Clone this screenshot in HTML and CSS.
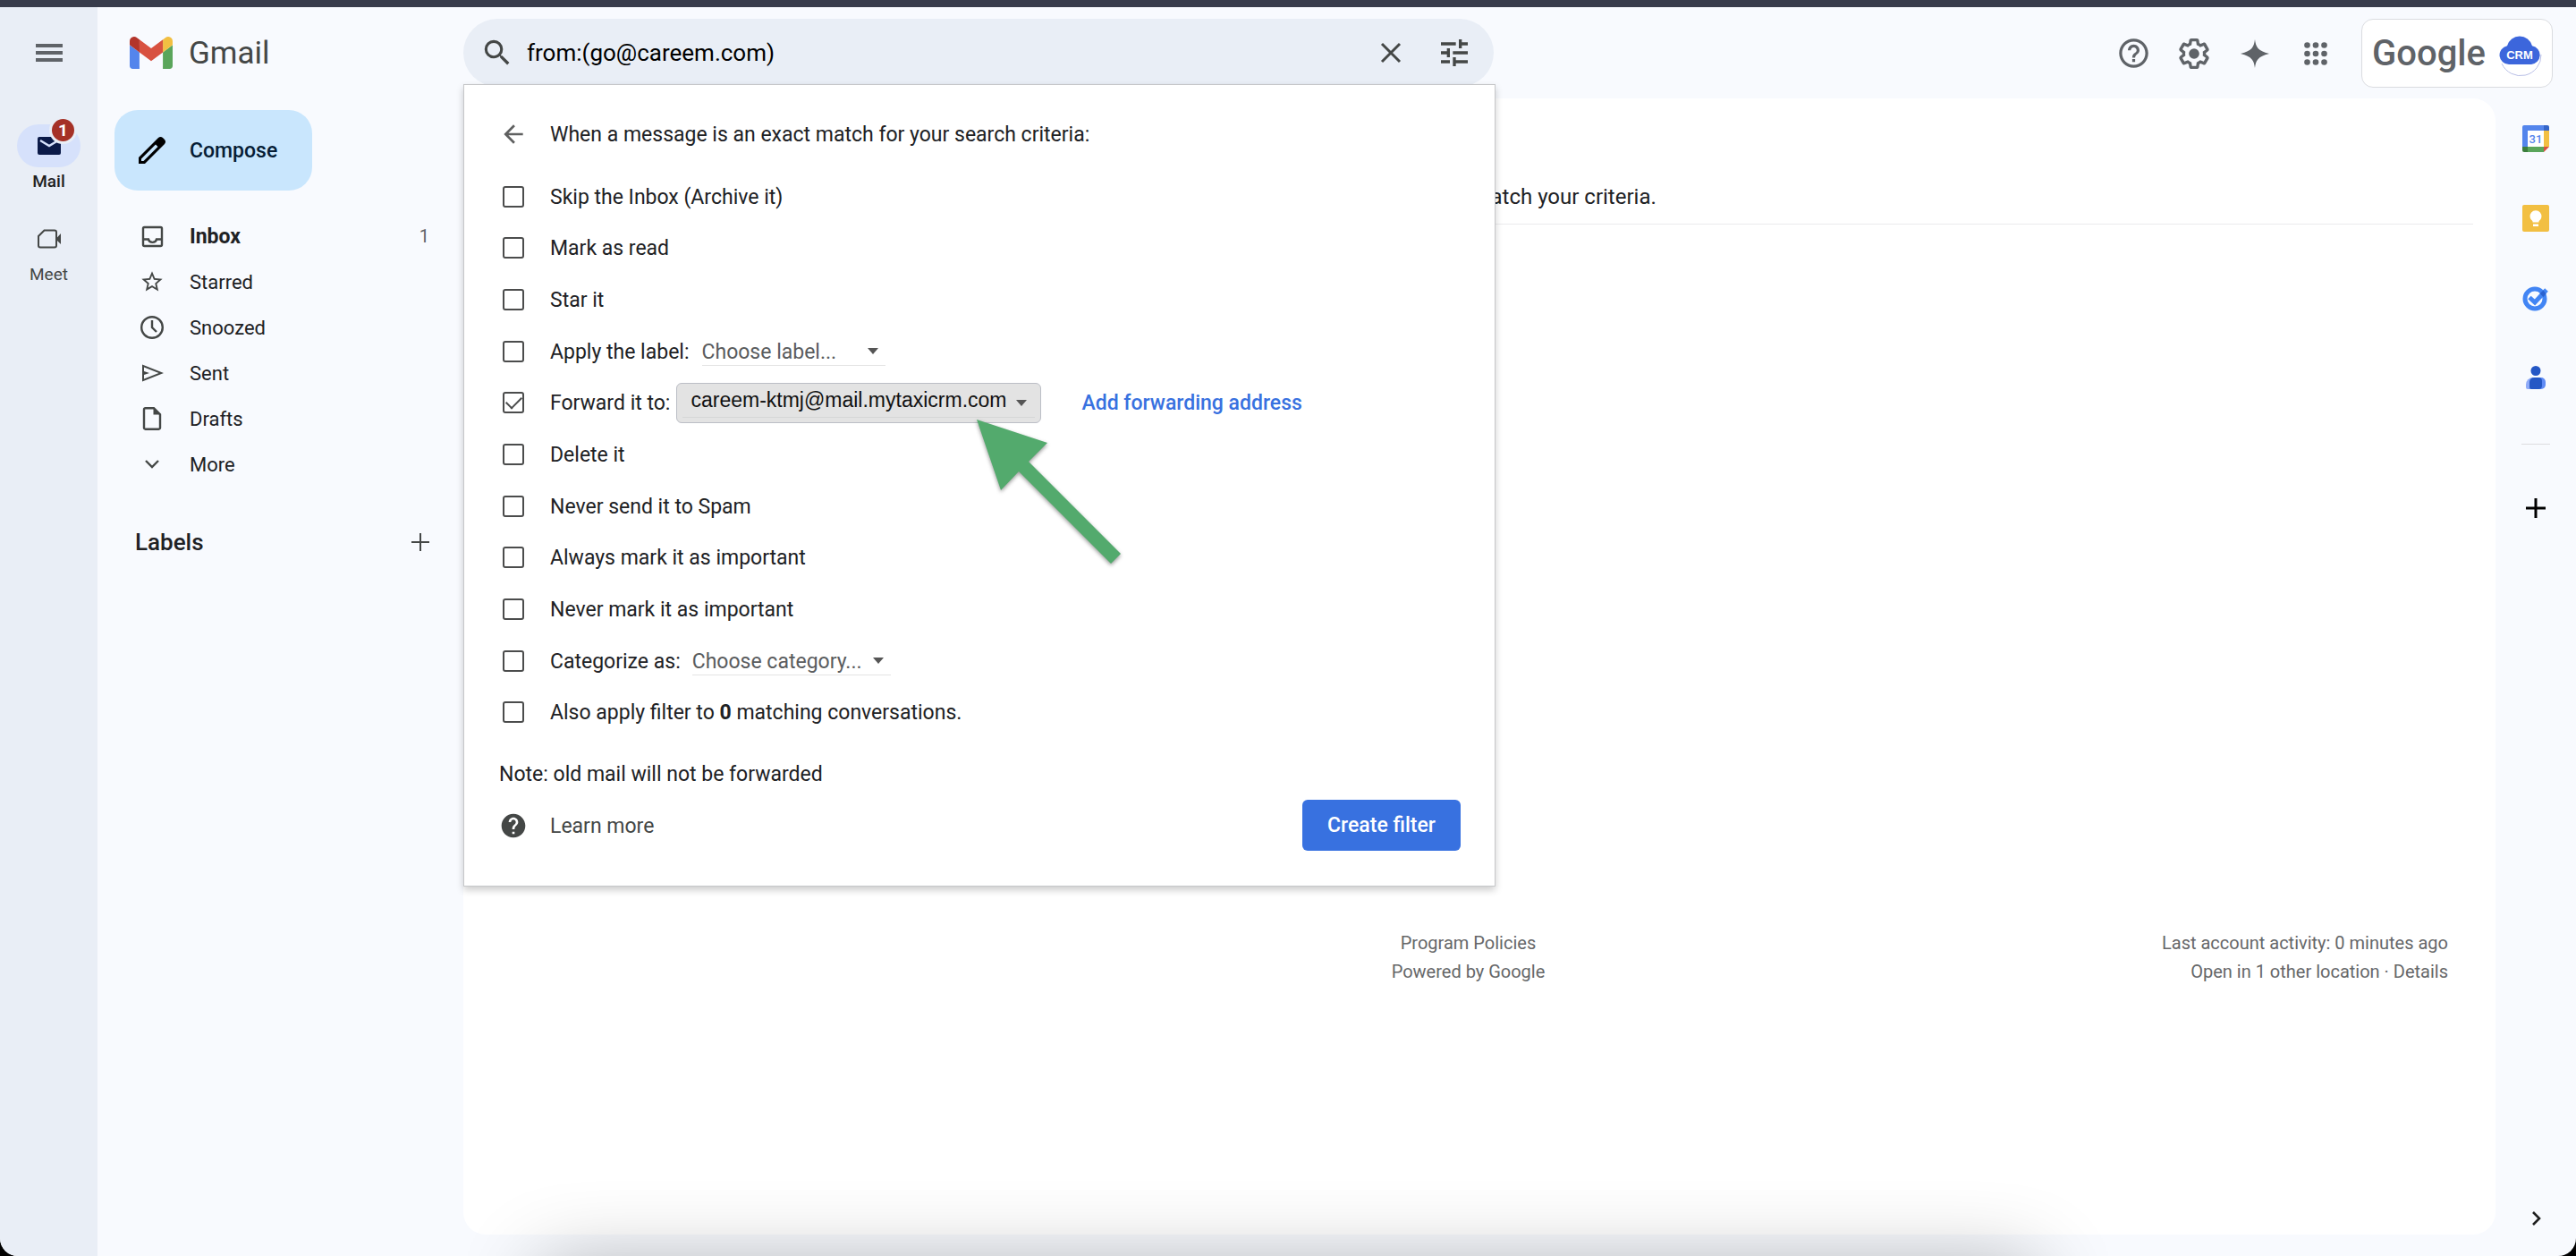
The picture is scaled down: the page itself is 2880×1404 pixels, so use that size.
FILE: index.html
```html
<!DOCTYPE html>
<html lang="en">
<head>
<meta charset="utf-8">
<title>Gmail</title>
<link rel="stylesheet" href="styles.css">
</head>
<body>
<div class="window">
  <nav class="rail" aria-label="Apps">
    <button class="icon-button" aria-label="Main menu">
      <svg width="30" height="20" viewBox="0 0 30 20"><path fill="#5f6368" d="M0 0h30v4H0zM0 8h30v4H0zM0 16h30v4H0z"/></svg>
    </button>
    <a class="rail-item rail-item-active" href="#mail">
      <span class="rail-icon">
        <svg width="26" height="20" viewBox="0 0 26 20"><rect width="26" height="20" rx="2" fill="#0b1a48"/><path d="M3 4l10 6 10-6" fill="none" stroke="#d6e1fb" stroke-width="2.4"/></svg>
        <span class="badge">1</span>
      </span>
      Mail
    </a>
    <a class="rail-item" href="#meet">
      <span class="rail-icon">
        <svg width="26" height="22" viewBox="0 0 26 22"><path d="M7.5 1.5H19a2 2 0 0 1 2 2v15a2 2 0 0 1-2 2H3a2 2 0 0 1-2-2V8z" fill="none" stroke="#444746" stroke-width="2"/><path d="M21 10.5L26 5v12l-5-5z" fill="#444746"/></svg>
      </span>
      Meet
    </a>
  </nav>

  <div class="app">
    <header class="header">
      <a class="brand" href="#home">
        <svg width="48" height="36" viewBox="52 42 88 66"><path fill="#5485ec" d="M58 108h14V74L52 59v43c0 3.32 2.69 6 6 6"/><path fill="#5aa55b" d="M120 108h14c3.32 0 6-2.69 6-6V59l-20 15"/><path fill="#f2bf42" d="M120 48v26l20-15v-8c0-7.42-8.47-11.65-14.4-7.2"/><path fill="#d85140" d="M72 74V48l24 18 24-18v26L96 92"/><path fill="#b3352b" d="M52 51v8l20 15V48l-5.6-4.2c-5.94-4.45-14.4-.22-14.4 7.2"/></svg>
        <span class="label-text">Gmail</span>
      </a>

      <div class="search">
        <form class="search-bar">
          <button type="button" class="icon-button" aria-label="Search">
            <svg width="38" height="38" viewBox="0 0 24 24"><path fill="#444746" d="M15.5 14h-.79l-.28-.27A6.47 6.47 0 0 0 16 9.500 6.500 6.500 0 1 0 9.500 16c1.610 0 3.090-.590 4.230-1.570l.270.280v.790l5 4.990L20.490 19zm-6 0C7.010 14 5 11.990 5 9.500S7.010 5 9.500 5 14 7.010 14 9.500 11.990 14 9.500 14z"/></svg>
          </button>
          <input class="search-input" type="text" value="from:(go@careem.com)" aria-label="Search mail">
          <button type="button" class="icon-button" aria-label="Clear search">
            <svg width="24" height="24" viewBox="0 0 24 24"><path d="M2 2l20 20M22 2L2 22" stroke="#444746" stroke-width="3" fill="none"/></svg>
          </button>
          <button type="button" class="icon-button" aria-label="Show search options">
            <svg width="40" height="40" viewBox="0 0 24 24"><path fill="#444746" d="M3 17v2h6v-2H3zM3 5v2h10V5H3zm10 16v-2h8v-2h-8v-2h-2v6h2zM7 9v2H3v2h4v2h2V9H7zm14 4v-2H11v2h10zm-6-4h2V7h4V5h-4V3h-2v6z"/></svg>
          </button>
        </form>

        <form class="filter">
          <div class="filter-title">
            <button type="button" class="cell-icon" aria-label="Back">
              <svg width="32" height="32" viewBox="0 0 24 24"><path fill="#5f6060" d="M20 11H7.830l5.590-5.590L12 4l-8 8 8 8 1.410-1.410L7.830 13H20z"/></svg>
            </button>
            <span class="label-text">When a message is an exact match for your search criteria:</span>
          </div>
          <div class="filter-rows">
            <div class="filter-row"><span class="cell-icon"><input type="checkbox" id="f1"></span><label class="label-text" for="f1">Skip the Inbox (Archive it)</label></div>
            <div class="filter-row"><span class="cell-icon"><input type="checkbox" id="f2"></span><label class="label-text" for="f2">Mark as read</label></div>
            <div class="filter-row"><span class="cell-icon"><input type="checkbox" id="f3"></span><label class="label-text" for="f3">Star it</label></div>
            <div class="filter-row"><span class="cell-icon"><input type="checkbox" id="f4"></span><label class="label-text" for="f4">Apply the label:</label>
              <span class="picker picker-label"><select aria-label="Label"><option>Choose label...</option></select></span></div>
            <div class="filter-row"><span class="cell-icon"><input type="checkbox" id="f5" checked></span><label class="label-text" for="f5">Forward it to:</label>
              <span class="picker picker-forward"><select aria-label="Forwarding address"><option>careem-ktmj@mail.mytaxicrm.com</option></select></span>
              <a class="add-link label-text" href="#forwarding">Add forwarding address</a></div>
            <div class="filter-row"><span class="cell-icon"><input type="checkbox" id="f6"></span><label class="label-text" for="f6">Delete it</label></div>
            <div class="filter-row"><span class="cell-icon"><input type="checkbox" id="f7"></span><label class="label-text" for="f7">Never send it to Spam</label></div>
            <div class="filter-row"><span class="cell-icon"><input type="checkbox" id="f8"></span><label class="label-text" for="f8">Always mark it as important</label></div>
            <div class="filter-row"><span class="cell-icon"><input type="checkbox" id="f9"></span><label class="label-text" for="f9">Never mark it as important</label></div>
            <div class="filter-row"><span class="cell-icon"><input type="checkbox" id="f10"></span><label class="label-text" for="f10">Categorize as:</label>
              <span class="picker picker-category"><select aria-label="Category"><option>Choose category...</option></select></span></div>
            <div class="filter-row"><span class="cell-icon"><input type="checkbox" id="f11"></span><label class="label-text" for="f11">Also apply filter to <b>0</b> matching conversations.</label></div>
          </div>
          <p class="note">Note: old mail will not be forwarded</p>
          <div class="filter-actions">
            <a class="learn" href="#learn">
              <span class="cell-icon"><svg width="32" height="32" viewBox="0 0 24 24"><path fill="#444746" d="M12 2C6.480 2 2 6.480 2 12s4.480 10 10 10 10-4.480 10-10S17.520 2 12 2zm1 17h-2v-2h2v2zm2.070-7.750l-.9.920C13.450 12.900 13 13.500 13 15h-2v-.5c0-1.100.450-2.100 1.170-2.830l1.240-1.260c.370-.360.590-.860.590-1.410 0-1.100-.9-2-2-2s-2 .9-2 2H8c0-2.210 1.790-4 4-4s4 1.790 4 4c0 .880-.360 1.680-.930 2.250z"/></svg></span>
              <span class="label-text">Learn more</span>
            </a>
            <button type="button" class="create">Create filter</button>
          </div>
          <svg class="pointer" width="200" height="190" viewBox="0 0 200 190" aria-hidden="true"><path fill="#53aa6d" d="M13 10l79 26-21 21 103 103-11 11L60 68 40 89z"/></svg>
        </form>
      </div>

      <div class="tools">
        <button class="icon-button" aria-label="Support"><svg width="39" height="39" viewBox="0 0 24 24"><path fill="#5f6368" d="M11 18h2v-2h-2v2zm1-16C6.480 2 2 6.480 2 12s4.480 10 10 10 10-4.480 10-10S17.520 2 12 2zm0 18c-4.410 0-8-3.590-8-8s3.590-8 8-8 8 3.590 8 8-3.590 8-8 8zm0-14c-2.210 0-4 1.790-4 4h2c0-1.100.9-2 2-2s2 .9 2 2c0 2-3 1.750-3 5h2c0-2.250 3-2.500 3-5 0-2.210-1.790-4-4-4z"/></svg></button>
        <button class="icon-button" aria-label="Settings"><svg width="40" height="40" viewBox="0 0 24 24"><path fill="#5f6368" d="M13.850 22.250h-3.700c-.740 0-1.360-.540-1.450-1.270l-.270-1.890c-.270-.140-.530-.290-.790-.460l-1.800.720c-.7.260-1.470-.030-1.810-.650L2.200 15.530c-.350-.660-.2-1.440.360-1.880l1.530-1.190c-.010-.150-.020-.3-.020-.460 0-.150.010-.310.020-.460l-1.520-1.190c-.590-.450-.740-1.260-.370-1.880l1.850-3.190c.340-.620 1.110-.9 1.790-.630l1.810.730c.260-.170.520-.320.780-.460l.270-1.910c.090-.7.710-1.250 1.440-1.250h3.700c.740 0 1.360.540 1.450 1.270l.270 1.890c.270.140.530.290.790.460l1.800-.720c.710-.260 1.480.030 1.820.650l1.840 3.180c.360.660.2 1.440-.360 1.880l-1.520 1.190c.010.150.020.3.020.460s-.010.310-.020.460l1.520 1.190c.560.450.720 1.230.370 1.860l-1.860 3.220c-.340.620-1.110.9-1.800.630l-1.800-.720c-.260.170-.520.320-.780.460l-.270 1.910c-.1.680-.720 1.220-1.460 1.220zm-3.230-2h2.760l.370-2.550.530-.220c.440-.180.880-.440 1.340-.780l.450-.340 2.380.960 1.380-2.400-2.030-1.580.070-.560c.030-.260.060-.510.060-.780s-.030-.530-.060-.780l-.070-.560 2.030-1.580-1.390-2.400-2.390.960-.450-.350c-.420-.320-.870-.580-1.330-.770l-.520-.220-.370-2.550h-2.760l-.370 2.550-.530.210c-.440.190-.880.440-1.340.790l-.450.330-2.380-.950-1.390 2.390 2.030 1.580-.070.560a7 7 0 0 0-.060.790c0 .260.020.530.060.780l.070.560-2.030 1.580 1.380 2.400 2.390-.960.450.350c.430.330.860.580 1.330.770l.530.220z"/><circle cx="12" cy="12" r="3.500" fill="#5f6368"/></svg></button>
        <button class="icon-button" aria-label="Ask Gemini"><svg width="32" height="32" viewBox="0 0 32 32"><path fill="#5f6368" d="M16 0C17 8 19 13 32 16C19 19 17 24 16 32C15 24 13 19 0 16C13 13 15 8 16 0z"/></svg></button>
        <button class="icon-button" aria-label="Google apps"><svg width="26" height="26" viewBox="0 0 26 26"><g fill="#5f6368"><circle cx="3.500" cy="3.500" r="3.300"/><circle cx="13" cy="3.500" r="3.300"/><circle cx="22.500" cy="3.500" r="3.300"/><circle cx="3.500" cy="13" r="3.300"/><circle cx="13" cy="13" r="3.300"/><circle cx="22.500" cy="13" r="3.300"/><circle cx="3.500" cy="22.500" r="3.300"/><circle cx="13" cy="22.500" r="3.300"/><circle cx="22.500" cy="22.500" r="3.300"/></g></svg></button>
        <a class="account" href="#account">
          <span class="account-name">Google</span>
          <svg width="48" height="54" viewBox="0 0 48 54"><path d="M3 38a23 23 0 0 0 44-10" fill="none" stroke="#b9bfe6" stroke-width="1"/><path fill="#3c66dc" d="M11 39A10.500 10.500 0 0 1 9 18.200A14.500 14.500 0 0 1 37 18.200A10.500 10.500 0 0 1 36 39z"/><text class="cloud-text" x="23" y="33" text-anchor="middle">CRM</text></svg>
        </a>
      </div>
    </header>

    <div class="body">
      <aside class="sidebar">
        <button class="compose">
          <svg width="32" height="32" viewBox="0 0 32 32"><path fill="#000" fill-rule="evenodd" d="M1 31v-7L23 2c1.500-1.300 3.500-1.300 5 0l2 2c1.400 1.500 1.400 3.500 0 5L8 31zM4 28h2.500L22.500 12l-2.500-2.500L4 25.500z"/></svg>
          <span class="label-text">Compose</span>
        </button>
        <ul class="folders">
          <li><a class="folder folder-active" href="#inbox"><svg width="28" height="28" viewBox="0 0 28 28"><g fill="none" stroke="#444746" stroke-width="2.400"><rect x="4" y="4" width="21" height="21" rx="1.500"/><path d="M4 17.500h6c1 4.500 8 4.500 9 0h6"/></g></svg><span class="label-text">Inbox</span><span class="count">1</span></a></li>
          <li><a class="folder" href="#starred"><svg width="28" height="28" viewBox="0 0 24 24"><path fill="#444746" d="M22 9.240l-7.190-.620L12 2 9.190 8.630 2 9.240l5.460 4.730L5.820 21 12 17.270 18.180 21l-1.630-7.030L22 9.240zM12 15.400l-3.760 2.270 1-4.280-3.320-2.880 4.380-.380L12 6.100l1.710 4.040 4.380.380-3.320 2.880 1 4.280L12 15.400z"/></svg><span class="label-text">Starred</span></a></li>
          <li><a class="folder" href="#snoozed"><svg width="28" height="28" viewBox="0 0 28 28"><g fill="none" stroke="#444746" stroke-width="2.400"><circle cx="14" cy="14" r="11.800"/><path d="M14 6v8l5 5"/></g></svg><span class="label-text">Snoozed</span></a></li>
          <li><a class="folder" href="#sent"><svg width="28" height="28" viewBox="0 0 28 28"><path fill="#444746" fill-rule="evenodd" d="M3 4.500L27 14 3 23.500zM5 7.500v4.500l6 2-6 2v4.500L21.500 14z"/></svg><span class="label-text">Sent</span></a></li>
          <li><a class="folder" href="#drafts"><svg width="28" height="28" viewBox="0 0 28 28"><path d="M6.500 2.200h9.500l7 7v15a1.500 1.500 0 0 1-1.500 1.500h-15a1.500 1.500 0 0 1-1.500-1.500v-20.500a1.500 1.500 0 0 1 1.500-1.500z" fill="none" stroke="#444746" stroke-width="2.400"/><path d="M15.500 1.500v8h8z" fill="#444746"/></svg><span class="label-text">Drafts</span></a></li>
          <li><a class="folder" href="#more"><svg width="28" height="28" viewBox="0 0 28 28"><path d="M7 10l7 7 7-7" fill="none" stroke="#444746" stroke-width="2.400"/></svg><span class="label-text">More</span></a></li>
        </ul>
        <div class="labels">
          <h2>Labels</h2>
          <button class="icon-button" aria-label="Create new label"><svg width="20" height="20" viewBox="0 0 20 20"><path d="M10 0v20M0 10h20" stroke="#444746" stroke-width="2"/></svg></button>
        </div>
      </aside>

      <main class="card">
        <p class="empty">Sorry, no messages match your criteria.</p>
        <footer class="foot">
          <p class="foot-center"><a href="#policies">Program Policies</a><br>Powered by Google</p>
          <p class="foot-right">Last account activity: 0 minutes ago<br>Open in 1 other location · <a href="#details">Details</a></p>
        </footer>
      </main>

      <aside class="side-apps" aria-label="Side panel">
        <a href="#calendar" aria-label="Calendar"><svg width="30" height="30" viewBox="0 0 30 30"><rect x="5" y="5" width="20" height="20" fill="#fff"/><path fill="#5485ec" d="M2 0h22v6H6v18H0V2a2 2 0 0 1 2-2z"/><path fill="#3565c8" d="M24 0h4a2 2 0 0 1 2 2v4h-6z"/><path fill="#f2bf42" d="M24 6h6v18h-6z"/><path fill="#5aa55b" d="M6 24h18v6H6z"/><path fill="#3b7d3d" d="M0 24h6v6H2a2 2 0 0 1-2-2z"/><path fill="#d85140" d="M24 24h6l-6 6z"/><text class="calendar-text" x="15" y="20" text-anchor="middle">31</text></svg></a>
        <a href="#keep" aria-label="Keep"><svg width="30" height="30" viewBox="0 0 30 30"><rect width="30" height="30" rx="2" fill="#f2bf42"/><path fill="#fff" d="M11.500 19.500v-1.200a6.500 6.500 0 1 1 7 0v1.200zM12 21.500h6V24h-6z"/></svg></a>
        <a href="#tasks" aria-label="Tasks"><svg width="30" height="30" viewBox="0 0 30 30"><circle cx="14" cy="16" r="11" fill="none" stroke="#4285f4" stroke-width="5"/><path d="M8 14.500l6 5.500L27 6" fill="none" stroke="#4285f4" stroke-width="5"/><path fill="#2a62d0" d="M19.500 10l4-3.500 3 4-3 3.500z"/></svg></a>
        <a href="#contacts" aria-label="Contacts"><svg width="30" height="30" viewBox="0 0 30 30"><circle cx="15" cy="7.500" r="5.500" fill="#2457c5"/><path fill="#8fabf8" d="M12 15a8 8 0 0 0-8 8v3a2 2 0 0 0 2 2h6z"/><path fill="#5f8bf5" d="M18 15h3a5 5 0 0 1 5 5v3a5 5 0 0 1-5 5h-3z"/><path fill="#2457c5" d="M13 15h5a4 4 0 0 1 4 4v5a4 4 0 0 1-4 4h-8a2 2 0 0 1-2-2v-6a5 5 0 0 1 5-5z"/></svg></a>
        <hr>
        <button class="icon-button" aria-label="Get add-ons"><svg width="22" height="22" viewBox="0 0 22 22"><path d="M11 0v22M0 11h22" stroke="#000" stroke-width="3"/></svg></button>
        <button class="icon-button collapse" aria-label="Hide side panel"><svg width="20" height="20" viewBox="0 0 20 20"><path d="M7 3l7 7-7 7" fill="none" stroke="#1f1f1f" stroke-width="2.600"/></svg></button>
      </aside>
    </div>
  </div>
  <div class="dock-shadow" aria-hidden="true"></div>
</div>
</body>
</html>
```
FILE: styles.css
```css
* {
  box-sizing: border-box;
}

body {
  margin: 0;
  background: #000;
  color: #202124;
  font: 23px/32px Roboto, sans-serif;
}

a {
  color: inherit;
  text-decoration: none;
}

svg {
  display: block;
  flex: none;
}

button,
input,
select {
  margin: 0;
  padding: 0;
  border: 0;
  background: none;
  color: inherit;
  font: inherit;
}

p,
h2,
ul {
  margin: 0;
  padding: 0;
}

.window {
  position: relative;
  display: flex;
  min-height: 100vh;
  overflow: hidden;
  border-top: 8px solid #383c4b;
  border-radius: 0 0 20px 20px;
  background: #f8fafe;
}

.icon-button {
  display: grid;
  place-items: center;
  flex: none;
  width: 40px;
  height: 48px;
}

/* Optical centring of text beside an icon */
.label-text {
  padding-top: 2px;
}

/* App rail */
.rail {
  display: flex;
  flex-direction: column;
  align-items: center;
  flex: none;
  width: 109px;
  padding-top: 27px;
  background: #e9eef6;
}

.rail-item {
  display: flex;
  flex-direction: column;
  align-items: center;
  margin-top: 24px;
  color: #444746;
  font-size: 19px;
  line-height: 32px;
}

.rail-item-active {
  margin-top: 56px;
  color: #1f1f1f;
  font-weight: 500;
}

.rail-icon {
  position: relative;
  display: grid;
  place-items: center;
  width: 71px;
  height: 48px;
  border-radius: 24px;
}

.rail-item-active .rail-icon {
  background: #d6e1fb;
}

.badge {
  position: absolute;
  top: -9px;
  right: 4px;
  width: 31px;
  height: 31px;
  border: 3px solid #e9eef6;
  border-radius: 50%;
  background: #a53127;
  color: #fff;
  font-size: 19px;
  font-weight: 700;
  line-height: 25px;
  text-align: center;
}

/* Header */
.app {
  display: flex;
  flex: 1;
  flex-direction: column;
  min-width: 0;
}

.header {
  display: flex;
  flex: none;
  height: 102px;
  padding: 13px 26px 0 0;
}

.brand {
  display: flex;
  align-items: center;
  flex: none;
  gap: 18px;
  width: 409px;
  height: 76px;
  padding-left: 36px;
  color: #444746;
  font-size: 35px;
}

.search {
  position: relative;
  flex: 0 1 1154px;
  min-width: 0;
}

.search-bar {
  display: flex;
  align-items: center;
  height: 76px;
  margin-right: 2px;
  padding: 0 24px 0 18px;
  border-radius: 38px;
  background: #e9eef6;
}

.search-input {
  flex: 1;
  min-width: 0;
  margin-left: 13px;
  color: #000;
  font-size: 26px;
  outline: 0;
}

.search-bar .icon-button:last-child {
  margin-left: 31px;
}

.tools {
  display: flex;
  align-items: center;
  gap: 28px;
  height: 77px;
  margin-left: auto;
}

.account {
  display: flex;
  align-items: center;
  justify-content: space-between;
  width: 214px;
  height: 77px;
  margin-left: 3px;
  padding: 0 11px;
  border: 1px solid #dadce0;
  border-radius: 13px;
  background: #fff;
}

.account-name {
  color: #5f6368;
  font-size: 40px;
  font-weight: 500;
}

.cloud-text {
  fill: #fff;
  font: 700 13px "Liberation Sans", sans-serif;
}

/* Filter panel */
.filter {
  position: absolute;
  z-index: 2;
  top: 73px;
  left: 0;
  width: 100%;
  padding: 26px 38px 39px 39px;
  border: 1px solid #c6c7c9;
  background: #fff;
  box-shadow: 0 4px 8px rgba(0, 0, 0, 0.2);
}

.filter-title,
.filter-row {
  display: flex;
  align-items: center;
}

.filter-title {
  height: 58px;
  margin-bottom: 12px;
}

.filter-rows {
  display: grid;
  grid-auto-rows: 1fr;
  height: 634px;
}

.cell-icon {
  display: grid;
  place-items: center;
  flex: none;
  width: 32px;
  height: 32px;
  margin-right: 25px;
}

.cell-icon input {
  display: grid;
  place-items: center;
  width: 24px;
  height: 24px;
  border: 2px solid #4b4c4c;
  border-radius: 3px;
  appearance: none;
}

.cell-icon input:checked::before {
  content: "";
  width: 15px;
  height: 8px;
  border: solid #4b4c4c;
  border-width: 0 0 2px 2px;
  transform: translateY(-2px) rotate(-45deg);
}

.picker {
  display: grid;
  align-items: center;
  height: 33px;
  border-bottom: 1px solid #e4e4e4;
  color: #5a5c5e;
}

.picker::after {
  content: "";
  grid-area: 1 / 1;
  justify-self: end;
  margin-right: 8px;
  border: solid transparent;
  border-width: 7px 6px 0;
  border-top-color: #555;
  pointer-events: none;
}

.picker select {
  grid-area: 1 / 1;
  width: 100%;
  height: 32px;
  padding-top: 2px;
  appearance: none;
}

.picker-label {
  width: 205px;
  margin-left: 14px;
}

.picker-category {
  width: 222px;
  margin-left: 13px;
}

.picker-forward {
  width: 408px;
  height: 45px;
  margin-left: 7px;
  padding: 0 7px 0 15px;
  border: 1px solid #bbbec6;
  border-radius: 6px;
  background: linear-gradient(#d5d6d6, #d5d6d6) 50% 37px / 394px 1px no-repeat #e3e3e3;
  color: #111;
  font-family: "Liberation Sans", sans-serif;
}

.picker-forward select {
  margin-bottom: 6px;
  padding-top: 0;
}

.add-link {
  margin-left: 45px;
  color: #3871e0;
  font-weight: 500;
}

.note {
  margin-top: 25px;
}

.filter-actions {
  display: flex;
  align-items: center;
  justify-content: space-between;
  margin-top: 12px;
}

.learn {
  display: flex;
  align-items: center;
  color: #444746;
}

.create {
  width: 177px;
  height: 57px;
  border-radius: 6px;
  background: #3871e0;
  color: #fff;
  font-weight: 500;
}

.pointer {
  position: absolute;
  top: 364px;
  left: 560px;
  filter: drop-shadow(0 2px 2px rgba(0, 0, 0, 0.4));
  pointer-events: none;
}

/* Sidebar */
.body {
  display: flex;
  flex: 1;
}

.sidebar {
  flex: none;
  width: 409px;
  padding: 13px 38px 0 19px;
}

.compose {
  display: flex;
  align-items: center;
  gap: 26px;
  height: 90px;
  padding: 0 39px 0 26px;
  border-radius: 26px;
  background: #c9e6fd;
  color: #061d35;
  font-weight: 500;
}

.folders {
  margin-top: 25px;
  list-style: none;
}

.folder {
  display: flex;
  align-items: center;
  gap: 28px;
  height: 51px;
  padding-left: 28px;
  font-size: 22px;
}

.folder-active {
  font-size: 23px;
  font-weight: 700;
}

.count {
  margin-left: auto;
  color: #5f6368;
  font-size: 20px;
  font-weight: 400;
}

.labels {
  display: flex;
  align-items: center;
  justify-content: space-between;
  height: 51px;
  margin-top: 36px;
  padding-left: 23px;
}

.labels .icon-button {
  width: 20px;
}

.labels h2 {
  font-size: 26px;
  font-weight: 500;
}

/* Message area */
.card {
  flex: 1;
  min-width: 0;
  margin-bottom: 24px;
  padding: 83px 25px 0 0;
  border-radius: 25px;
  background: #fff;
}

.empty {
  height: 58px;
  padding-top: 11px;
  border-bottom: 1px solid #ebebed;
  font-size: 24px;
  text-align: center;
}

.foot {
  display: grid;
  grid-template-columns: 1fr auto 1fr;
  margin-top: 787px;
  padding-right: 28px;
  color: #666769;
  font-size: 20px;
}

.foot-center {
  grid-column: 2;
  padding-left: 28px;
  text-align: center;
}

.foot-right {
  text-align: right;
}

/* Side panel */
.side-apps {
  display: flex;
  flex-direction: column;
  align-items: center;
  flex: none;
  gap: 59px;
  width: 90px;
  padding: 30px 0 30px;
}

.side-apps .icon-button {
  height: 24px;
}

.side-apps .collapse {
  margin-top: auto;
}

.side-apps hr {
  width: 32px;
  margin: 0;
  border: 0;
  border-top: 1px solid #dcdde0;
}

.calendar-text {
  fill: #5485ec;
  font: 500 13px Roboto, sans-serif;
}

.dock-shadow {
  position: absolute;
  z-index: 3;
  right: 21%;
  bottom: -120px;
  left: 21%;
  height: 110px;
  box-shadow: 0 0 90px rgba(0, 0, 0, 0.3);
  pointer-events: none;
}
```
